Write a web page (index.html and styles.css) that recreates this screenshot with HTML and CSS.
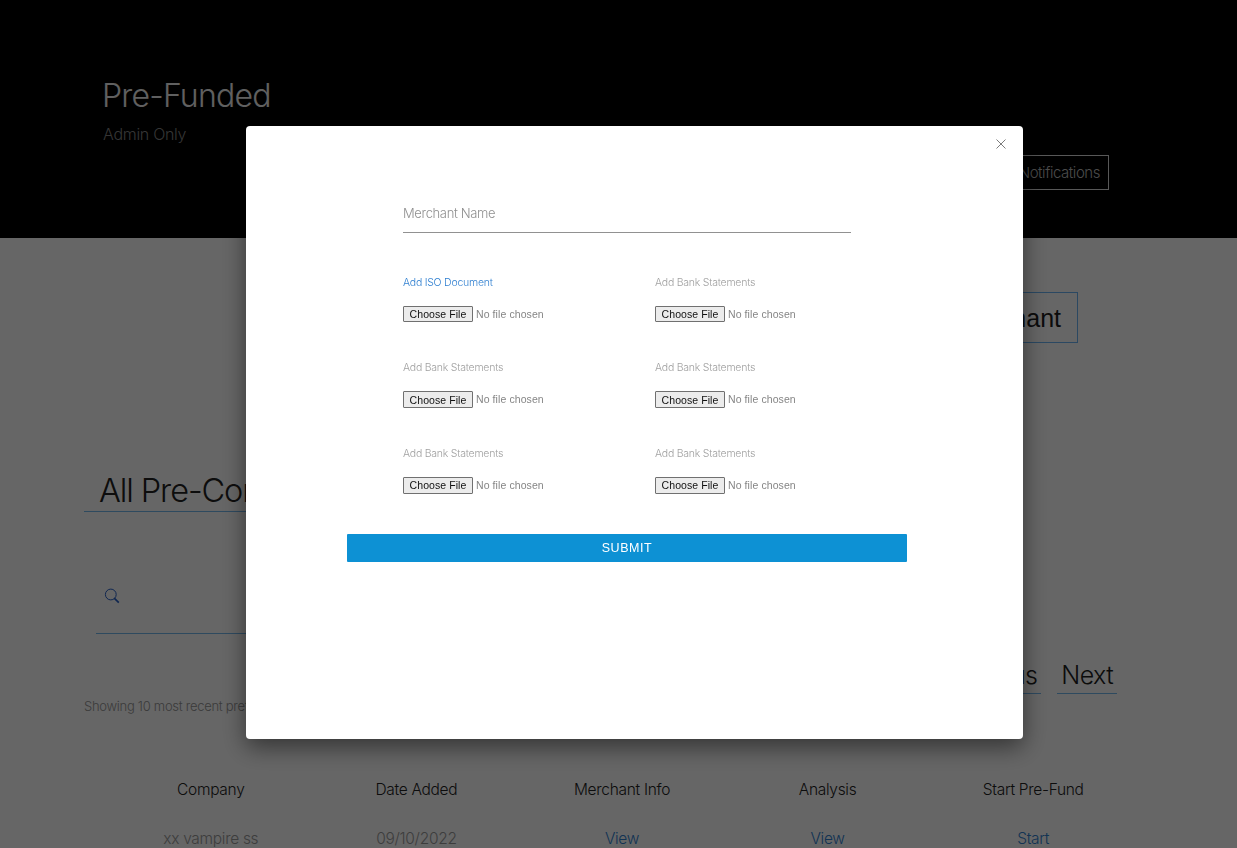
FILE: index.html
```html
<!DOCTYPE html>
<html lang="en">
<head>
<meta charset="utf-8">
<title>Pre-Funded</title>
<link rel="stylesheet" href="styles.css">
</head>
<body>
<div class="page">
  <header class="hero">
    <div class="hero-text">
      <h1 class="hero-title">Pre-Funded</h1>
      <p class="hero-sub">Admin Only</p>
    </div>
    <a class="btn-notify">Notifications</a>
  </header>
  <main class="content">
    <div class="add-row"><a class="btn-add">Add Merchant</a></div>
    <h2 class="section-title">All Pre-Contracts</h2>
    <div class="search">
      <svg class="search-icon" viewBox="0 0 16 16" width="16" height="16"><circle cx="6.8" cy="6.5" r="5.4"/><path d="M10.2 10.2 L14.8 14.6" class="handle"/></svg>
    </div>
    <nav class="pager"><a class="pager-link">Previous</a><a class="pager-link">Next</a></nav>
    <p class="note">Showing 10 most recent prefunded</p>
    <div class="table">
      <span class="th">Company</span><span class="th">Date Added</span><span class="th">Merchant Info</span><span class="th">Analysis</span><span class="th">Start Pre-Fund</span>
      <span class="td">xx vampire ss</span><span class="td">09/10/2022</span><a class="td link">View</a><a class="td link">View</a><a class="td link">Start</a>
    </div>
  </main>
</div>
<div class="overlay">
  <section class="modal">
    <svg class="close" viewBox="0 0 10 10" width="10" height="10"><path d="M.5 .5 L9.5 9.5 M9.5 .5 L.5 9.5"/></svg>
    <form class="form">
      <div class="name-field"><span class="name-label">Merchant Name</span></div>
      <div class="files">
        <div class="file"><span class="file-label active">Add ISO Document</span><div class="picker"><span class="choose">Choose File</span><span class="none">No file chosen</span></div></div>
        <div class="file"><span class="file-label">Add Bank Statements</span><div class="picker"><span class="choose">Choose File</span><span class="none">No file chosen</span></div></div>
        <div class="file"><span class="file-label">Add Bank Statements</span><div class="picker"><span class="choose tall">Choose File</span><span class="none">No file chosen</span></div></div>
        <div class="file"><span class="file-label">Add Bank Statements</span><div class="picker"><span class="choose tall">Choose File</span><span class="none">No file chosen</span></div></div>
        <div class="file"><span class="file-label">Add Bank Statements</span><div class="picker"><span class="choose last">Choose File</span><span class="none">No file chosen</span></div></div>
        <div class="file"><span class="file-label">Add Bank Statements</span><div class="picker"><span class="choose last">Choose File</span><span class="none">No file chosen</span></div></div>
      </div>
    </form>
    <div class="submit">SUBMIT</div>
  </section>
</div>
</body>
</html>
```
FILE: styles.css
```css
* { box-sizing: border-box; }
body { margin: 0; font-family: Inter, "Liberation Sans", Arial, sans-serif; font-weight: 300; background: #fff; }
h1, h2, p { margin: 0; font-weight: 300; }
.page { height: 848px; overflow: hidden; }

.hero { height: 238px; background: #000; display: flex; justify-content: space-between; align-items: flex-start; padding: 76px 128px 0 102px; }
.hero-title { font-size: 32px; line-height: 40px; color: #f0f0f0; letter-spacing: -0.8px; }
.hero-sub { margin: 8px 0 0 1px; font-size: 16px; line-height: 20px; color: #858585; letter-spacing: -0.3px; }
.btn-notify { margin-top: 79px; width: 110px; height: 35px; border: 1px solid #ddd; color: #bbb; font-size: 15px; line-height: 33px; text-align: right; padding-right: 8px; letter-spacing: -0.45px; }

.content { padding: 54px 0 0 84px; }
.add-row { display: flex; justify-content: flex-end; padding-right: 159px; }
.btn-add { height: 51px; border: 1px solid #6bb5f5; font: 400 25px/50px "Liberation Sans", Arial, sans-serif; padding: 0 16px; color: #1d1d1d; }
.section-title { margin-top: 128px; height: 41px; width: 500px; border-bottom: 1px solid #74b8ee; padding-left: 15px; font-size: 32.5px; line-height: 40px; color: #222; letter-spacing: -1.1px; }
.search { margin: 76px 0 0 12px; padding-left: 8px; width: 400px; height: 46px; border-bottom: 1px solid #74b8ee; }
.search-icon { display: block; fill: none; stroke: #2760c8; stroke-width: 1; }
.handle { stroke-width: 1.7; }
.pager { display: flex; justify-content: flex-end; gap: 16px; padding-right: 120px; margin-top: 22px; }
.pager-link { height: 38px; border-bottom: 1px solid #74b8ee; padding: 0 4px; font-size: 25px; line-height: 38px; color: #1d1d1d; letter-spacing: -0.6px; }
.note { margin-top: 4px; font-size: 13px; line-height: 16px; color: #939393; letter-spacing: -0.28px; }
.table { margin: 66px 0 0 24px; width: 1028px; display: grid; grid-template-columns: repeat(5, 1fr); row-gap: 29px; text-align: center; font-size: 15.5px; line-height: 20px; letter-spacing: -0.3px; color: #222; }
.td { color: #9a9a9a; }
.td.link { color: #2f7fd0; }

.overlay { position: fixed; inset: 0; background: rgba(0,0,0,.6); padding: 126px 0 0 246px; }
.modal { position: relative; width: 777px; height: 613px; background: #fff; border-radius: 4px; box-shadow: 0 8px 24px rgba(0,0,0,.5); padding: 74px 0 0; }
.close { position: absolute; right: 17px; top: 13px; fill: none; stroke: #7c7c7c; stroke-width: 1; }
.form { width: 448px; margin-left: 157px; }
.name-field { height: 33px; border-bottom: 1px solid #919191; font-size: 13px; line-height: 26px; color: #909090; letter-spacing: -0.35px; }
.files { display: grid; grid-template-columns: 252px 1fr; margin-top: 43px; grid-template-rows: 85px 86px 86px; }
.file-label { display: block; font-size: 10.5px; line-height: 14px; color: #a0a0a0; letter-spacing: -0.23px; }
.file-label.active { color: #2f7fd0; }
.picker { display: flex; align-items: flex-start; gap: 3px; margin-top: 16px; font: 400 10.5px/17px "Liberation Sans", Arial, sans-serif; }
.choose { width: 70px; height: 16px; border: 1px solid #707070; border-radius: 1px; background: #ececec; color: #111; line-height: 15px; text-align: center; white-space: nowrap; letter-spacing: .07px; }
.choose.tall { height: 17px; line-height: 17px; }
.choose.last { height: 17px; }
.none { color: #858585; white-space: nowrap; letter-spacing: .09px; }
.submit { margin: 1px 0 0 101px; width: 560px; height: 28px; border-radius: 1px; background: #0d91d4; color: #fff; font: 400 12.5px/28px "Liberation Sans", Arial, sans-serif; text-align: center; letter-spacing: .55px; }
```
